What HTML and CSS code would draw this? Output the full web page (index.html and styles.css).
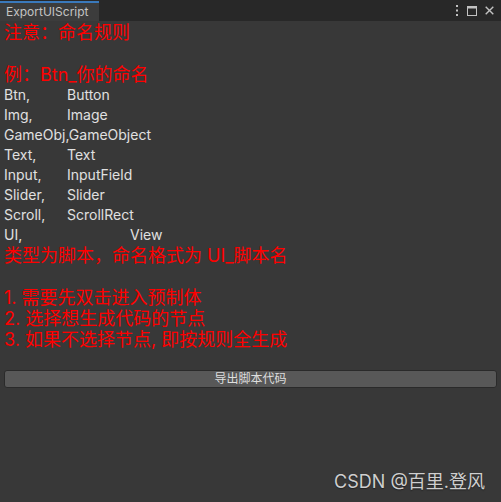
FILE: index.html
```html
<!DOCTYPE html>
<html>
<head>
<meta charset="utf-8">
<link rel="stylesheet" href="styles.css">
</head>
<body>
<div class="window">
  <div class="tabbar">
    <div class="tab">ExportUIScript</div>
    <div class="controls">
      <svg class="ico" width="4" height="11" viewBox="0 0 4 11"><rect x="1" y="0" width="2" height="2" fill="#c2c2c2"/><rect x="1" y="4.5" width="2" height="2" fill="#c2c2c2"/><rect x="1" y="9" width="2" height="2" fill="#c2c2c2"/></svg>
      <svg class="ico" width="10" height="10" viewBox="0 0 10 10"><rect x="0.5" y="0.5" width="9" height="9" fill="none" stroke="#c2c2c2"/><rect x="0.5" y="0.5" width="9" height="2" fill="#c2c2c2"/></svg>
      <svg class="ico" width="9" height="9" viewBox="0 0 9 9"><path d="M0.7 0.7L8.3 8.3M8.3 0.7L0.7 8.3" stroke="#c2c2c2" stroke-width="1.4"/></svg>
    </div>
  </div>
  <div class="content">
    <div class="red">注意：命名规则</div>
    <div class="red">&nbsp;</div>
    <div class="red">例：Btn_你的命名</div>
    <div class="white">Btn,	Button</div>
    <div class="white">Img,	Image</div>
    <div class="white">GameObj,GameObject</div>
    <div class="white">Text,	Text</div>
    <div class="white">Input,	InputField</div>
    <div class="white">Slider,	Slider</div>
    <div class="white">Scroll,	ScrollRect</div>
    <div class="white">UI,		View</div>
    <div class="red">类型为脚本，命名格式为 UI_脚本名</div>
    <div class="red">&nbsp;</div>
    <div class="red">1. 需要先双击进入预制体</div>
    <div class="red">2. 选择想生成代码的节点</div>
    <div class="red">3. 如果不选择节点, 即按规则全生成</div>
    <div class="btnrow"><div class="btn">导出脚本代码</div></div>
    <div class="spacer"></div>
    <div class="mark">CSDN @百里.登风</div>
  </div>
</div>
</body>
</html>
```
FILE: styles.css
```css
html, body {
  margin: 0;
  padding: 0;
  background: #383838;
}
.window {
  width: 501px;
  height: 502px;
  display: flex;
  flex-direction: column;
  font-family: Inter, "Noto Sans CJK SC", sans-serif;
}
.tabbar {
  height: 21px;
  background: #282828;
  display: flex;
  align-items: stretch;
  justify-content: space-between;
}
.tab {
  margin-top: 1px;
  width: 93px;
  padding-left: 6px;
  background: #3c3c3c;
  border-top: 2px solid #3a79bb;
  color: #c4c4c4;
  font-size: 12px;
  line-height: 18px;
}
.controls {
  display: flex;
  align-items: center;
  gap: 8px;
  padding-right: 7px;
}
.ico { display: block; }
.content {
  flex: 1;
  background: #383838;
  padding: 0 4px;
  display: flex;
  flex-direction: column;
}
.red {
  color: #ff0000;
  font-size: 18px;
  line-height: 21px;
  white-space: pre;
}
.content > .red:first-child { margin-top: 1px; }
.white {
  color: #e0e0e0;
  font-size: 14px;
  line-height: 20px;
  white-space: pre;
  tab-size: 63px;
}
.btnrow {
  margin-top: 20px;
}
.btn {
  height: 16px;
  background: #585858;
  border: 1px solid #2a2a2a;
  border-radius: 3px;
  color: #dedede;
  font-size: 12px;
  line-height: 16px;
  text-align: center;
}
.spacer { flex: 1; }
.mark {
  align-self: flex-end;
  margin-right: 12px;
  margin-bottom: 9px;
  color: #cfcfcf;
  font-size: 18px;
  line-height: 22px;
  text-shadow: 0 1px 1px #222;
}
```
